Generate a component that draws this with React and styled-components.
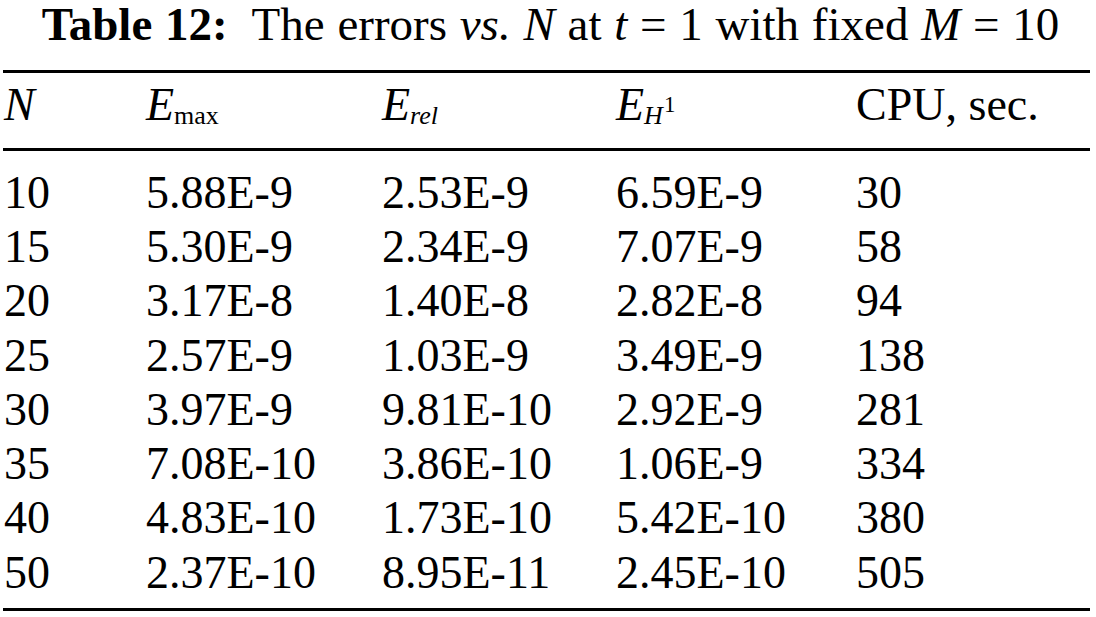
import React from 'react'
import styled, { createGlobalStyle } from 'styled-components'

const Global = createGlobalStyle`
  body {
    margin: 0;
    background: #fff;
    color: #000;
    font-family: "Liberation Serif", "Times New Roman", serif;
  }
`

const Wrap = styled.div`
  width: 1087px;
  margin-left: 3px;
`

const Caption = styled.div`
  text-align: center;
  font-size: 47px;
  line-height: 48px;
  height: 70px;
  padding-left: 8px;
  word-spacing: 1px;
  white-space: nowrap;
`

const Bold = styled.b`
  font-weight: 700;
  margin-right: 12px;
`

const Table = styled.div`
  border-top: 3px solid #000;
  border-bottom: 3px solid #000;
`

const Row = styled.div`
  display: grid;
  grid-template-columns: 142px 236px 234px 240px 1fr;
  font-size: 46px;
  height: 54.3px;
  align-items: center;
  padding-left: 1px;
`

const Head = styled(Row)`
  border-bottom: 3px solid #000;
  height: 63px;
  padding-bottom: 12px;
  margin-bottom: 14px;
`

const Body = styled.div`
  padding-bottom: 9px;
`

const I = styled.i`
  font-style: italic;
`

const Sub = styled.sub`
  font-size: 26px;
  vertical-align: -4px;
  line-height: 0;
  font-style: ${p => (p.$it ? 'italic' : 'normal')};
`

const Sup = styled.sup`
  font-size: 23px;
  vertical-align: 8px;
  line-height: 0;
  margin-left: 1px;
`

const rows = [
  ['10', '5.88E-9', '2.53E-9', '6.59E-9', '30'],
  ['15', '5.30E-9', '2.34E-9', '7.07E-9', '58'],
  ['20', '3.17E-8', '1.40E-8', '2.82E-8', '94'],
  ['25', '2.57E-9', '1.03E-9', '3.49E-9', '138'],
  ['30', '3.97E-9', '9.81E-10', '2.92E-9', '281'],
  ['35', '7.08E-10', '3.86E-10', '1.06E-9', '334'],
  ['40', '4.83E-10', '1.73E-10', '5.42E-10', '380'],
  ['50', '2.37E-10', '8.95E-11', '2.45E-10', '505'],
]

export default function App() {
  return (
    <Wrap>
      <Global />
      <Caption>
        <Bold>Table 12:</Bold> The errors <I>vs.</I> <I>N</I> at <I>t</I> = 1 with fixed <I>M</I> = 10
      </Caption>
      <Table>
        <Head>
          <span><I>N</I></span>
          <span><I>E</I><Sub>max</Sub></span>
          <span><I>E</I><Sub $it>rel</Sub></span>
          <span><I>E</I><Sub $it>H</Sub><Sup>1</Sup></span>
          <span>CPU, sec.</span>
        </Head>
        <Body>
          {rows.map(r => (
            <Row key={r[0]}>
              {r.map((c, i) => <span key={i}>{c}</span>)}
            </Row>
          ))}
        </Body>
      </Table>
    </Wrap>
  )
}
